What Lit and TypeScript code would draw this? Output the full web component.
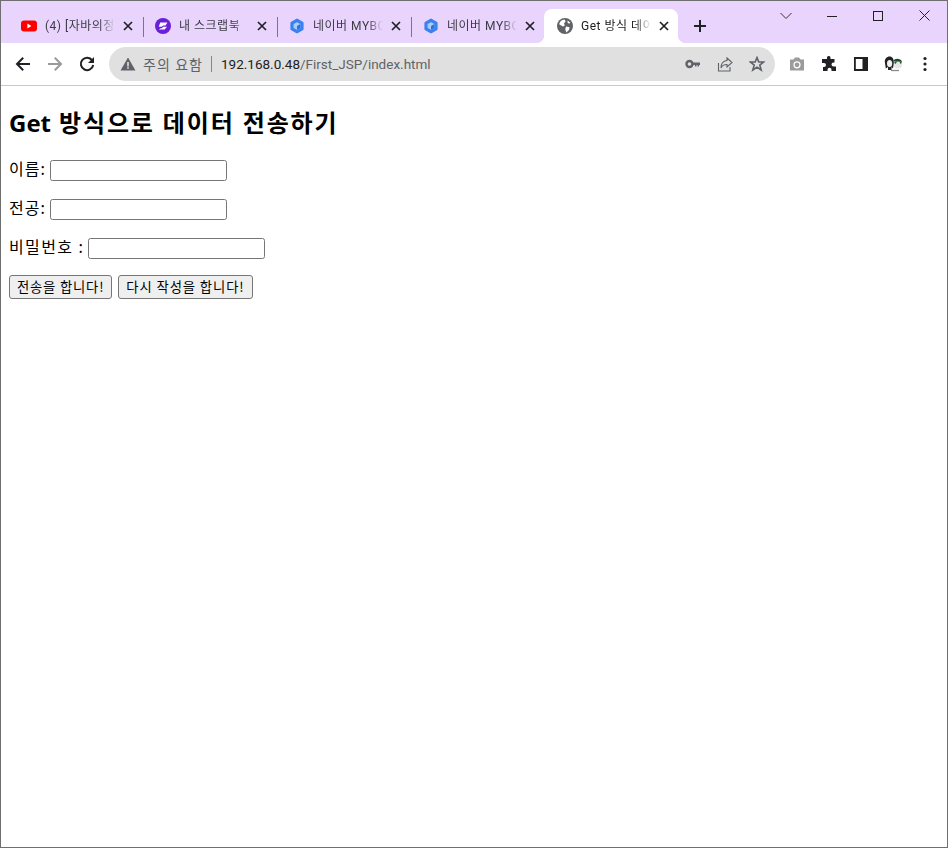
import { LitElement, html, css } from "lit";
import { customElement } from "lit/decorators.js";

const closeIcon = html`<svg class="x" width="10" height="10" viewBox="0 0 10 10"><path d="M1 1L9 9M9 1L1 9" stroke="#202124" stroke-width="1.7" fill="none"/></svg>`;

const yt = html`<svg width="16" height="16" viewBox="0 0 16 16"><rect y="2.5" width="16" height="11" rx="3" fill="#f00"/><path d="M6.4 5.6L10.4 8L6.4 10.4Z" fill="#fff"/></svg>`;
const scrap = html`<svg width="16" height="16" viewBox="0 0 16 16"><circle cx="8" cy="8" r="8" fill="#6a1fd8"/><path d="M5.2 4.6H12.4L10.6 7.4H8.4L6.4 8.8H3.8Z" fill="#fff"/><path d="M7.8 8.8H12L9.6 11.6H3.8L5.6 10.2H7.2Z" fill="#fff"/></svg>`;
const hex = html`<svg width="14" height="16" viewBox="0 0 14 16"><path d="M7 0.6Q7.4 .6 8 1L12.8 3.8Q13.6 4.3 13.6 5V11Q13.6 11.7 12.8 12.2L8 15Q7 15.5 6 15L1.2 12.2Q.4 11.7 .4 11V5Q.4 4.3 1.2 3.8L6 1Q6.6 .6 7 .6Z" fill="#3b82ee"/><path d="M7 4.2L10.4 6.1V9.9L7 11.8L3.6 9.9V6.1Z" fill="#a9ccf8"/><path d="M7 8L10.4 6.1V9.9L7 11.8Z" fill="#2a6ee0"/></svg>`;
const globe = html`<svg width="16" height="16" viewBox="0 0 16 16"><circle cx="8" cy="8" r="8" fill="#5f6368"/><path d="M4.8 2.2L7.6 1.6L8.6 3.2L7 5.6L7.8 7.6L5.8 8.6L2.2 6.2C2.6 4.6 3.4 3.2 4.8 2.2ZM9 8.6L12.6 9.2L12 12L9.4 14.4L8.2 11.2Z" fill="#fff"/><path d="M10.6 2.4L13.4 4.8L12 5.8L10.4 4.2Z" fill="#fff"/></svg>`;

interface Tab { icon: unknown; title: string; }
const tabs: Tab[] = [
  { icon: yt, title: "(4) [자바의정석" },
  { icon: scrap, title: "내 스크랩북" },
  { icon: hex, title: "네이버 MYBOX" },
  { icon: hex, title: "네이버 MYBOX" },
];

@customElement("app-root")
export class AppRoot extends LitElement {
  static styles = css`
    :host { display: block; width: 948px; height: 848px; box-sizing: border-box; border: 1px solid #6f6f6f; background: #fff; overflow: hidden; font-family: "Noto Sans CJK KR", "Liberation Sans", sans-serif; }
    .tabstrip { height: 42px; background: #e9d4fd; display: flex; position: relative; padding: 8px 0 0 7px; box-sizing: border-box; }
    .tab { width: 134px; height: 34px; display: flex; align-items: center; padding: 0 0 0 13px; box-sizing: border-box; position: relative; font: 12px "Roboto", "Noto Sans CJK KR", sans-serif; color: #3c3c44; flex: none; }
    .tab .ic { width: 16px; height: 16px; display: flex; justify-content: center; flex: none; margin-right: 8px; }
    .tab .t { width: 70px; line-height: 16px; letter-spacing: 0.5px; overflow: hidden; white-space: nowrap; flex: none; -webkit-mask-image: linear-gradient(90deg,#000 78%,transparent); mask-image: linear-gradient(90deg,#000 78%,transparent); }
    .tab .x { margin-left: 8px; flex: none; }
    .tab.sep::after { content: ""; position: absolute; right: -2px; top: 8px; height: 20px; width: 1px; background: #7b7485; }
    .tab.active { background: #fff; border-radius: 8px 8px 0 0; color: #202124; }
    .tab.active::before, .tab.active .r { content: ""; position: absolute; bottom: 0; width: 8px; height: 8px; }
    .tab.active::before { left: -8px; background: radial-gradient(circle at 0 0, transparent 8px, #fff 8.5px); }
    .tab.active .r { right: -8px; background: radial-gradient(circle at 100% 0, transparent 8px, #fff 8.5px); }
    .plus { margin: 9px 0 0 14px; width: 16px; height: 16px; flex: none; }
    .win { position: absolute; top: 0; right: 0; display: flex; }
    .win div { width: 46px; height: 29px; display: flex; align-items: center; justify-content: center; }
    .toolbar { height: 42px; background: #fff; display: flex; align-items: center; border-bottom: 1px solid #c8c8c8; box-sizing: content-box; }
    .nav { width: 16px; height: 16px; margin-left: 14px; flex: none; display: block; }
    .nav + .nav { margin-left: 16px; }
    .omni { margin-left: 14px; width: 666px; height: 34px; border-radius: 17px; background: #e0e0e0; display: flex; align-items: center; box-sizing: border-box; padding-left: 11px; flex: none; font: 13.5px "Roboto", "Noto Sans CJK KR", sans-serif; color: #5f6368; }
    .omni .warn { flex: none; margin-right: 7px; }
    .omni .lbl { font-size: 14px; letter-spacing: 1px; }
    .omni .bar { width: 1px; height: 16px; background: #80868b; margin: 0 9px 0 8px; flex: none; }
    .omni .host { color: #202124; }
    .omni .spacer { flex: 1; }
    .omni svg.r { flex: none; margin-right: 16px; }
    .omni svg.last { margin-right: 10px; }
    .tools { display: flex; align-items: center; margin-left: 14px; gap: 16px; }
    .tools svg { flex: none; display: block; }
    .tools .avatar { margin-left: -1px; margin-right: 3px; }
    main { padding: 0 8px; color: #000; }
    h2 { margin: 22px 0 0; font: bold 24px/30px "Open Sans", "Noto Sans CJK KR", sans-serif; letter-spacing: 1.85px; white-space: nowrap; }
    h2 .en { letter-spacing: 0; }
    p { margin: 0; height: 23px; display: flex; align-items: center; font-size: 16px; }
    p.f1 { margin-top: 21px; }
    p.f { margin-top: 16px; }
    p.b { margin-top: 15px; }
    p span { margin-right: 4px; padding-bottom: 5px; letter-spacing: 1px; }
    p span.long { letter-spacing: 1.4px; }
    input { width: 177px; height: 21px; box-sizing: border-box; border: 1px solid #767676; border-radius: 2.5px; background: #fff; padding: 1px 2px; margin: 0; flex: none; }
    button { height: 24px; box-sizing: border-box; border: 1px solid #767676; border-radius: 3px; background: #efefef; font: 13.33px "Noto Sans CJK KR", sans-serif; letter-spacing: 0.8px; color: #000; padding: 0 7px; margin-right: 6px; flex: none; white-space: nowrap; }
    button.wide { letter-spacing: 0.9px; }
  `;

  render() {
    return html`
      <div class="tabstrip">
        ${tabs.map((t, i) => html`
          <div class="tab ${i < 3 ? "sep" : ""}">
            <span class="ic">${t.icon}</span><span class="t">${t.title}</span>${closeIcon}
          </div>`)}
        <div class="tab active"><span class="r"></span><span class="ic">${globe}</span><span class="t">Get 방식 데이터</span>${closeIcon}</div>
        <svg class="plus" viewBox="0 0 16 16"><path d="M8 2V14M2 8H14" stroke="#202124" stroke-width="2"/></svg>
        <div class="win">
          <div><svg width="12" height="8" viewBox="0 0 12 8"><path d="M.5 1L6 6.5L11.5 1" stroke="#333" fill="none"/></svg></div>
          <div><svg width="10" height="10" viewBox="0 0 10 10"><path d="M0 5.5H10" stroke="#222"/></svg></div>
          <div><svg width="10" height="10" viewBox="0 0 10 10"><rect x=".5" y=".5" width="9" height="9" stroke="#222" fill="none"/></svg></div>
          <div><svg width="11" height="11" viewBox="0 0 11 11"><path d="M.5 .5L10.5 10.5M10.5 .5L.5 10.5" stroke="#222" fill="none"/></svg></div>
        </div>
      </div>
      <div class="toolbar">
        <svg class="nav" viewBox="0 0 16 16"><path d="M15 8H2.5M8.2 1.8L2 8L8.2 14.2" stroke="#202124" stroke-width="2" fill="none"/></svg>
        <svg class="nav" viewBox="0 0 16 16"><path d="M1 8H13.5M7.8 1.8L14 8L7.8 14.2" stroke="#9a9a9e" stroke-width="2" fill="none"/></svg>
        <svg class="nav" viewBox="0 0 16 16"><path d="M13.2 4.4A6.2 6.2 0 1 0 14.2 9" stroke="#202124" stroke-width="2" fill="none"/><path d="M15 1V7H9Z" fill="#202124"/></svg>
        <div class="omni">
          <svg class="warn" width="16" height="16" viewBox="0 0 16 16"><path d="M8 1.5L15.5 14.5H.5Z" fill="#5f6368"/><path d="M7.2 6H8.8V10.5H7.2ZM7.2 11.3H8.8V12.8H7.2Z" fill="#e0e0e0"/></svg>
          <span class="lbl">주의 요함</span><span class="bar"></span>
          <span><span class="host">192.168.0.48</span>/First_JSP/index.html</span>
          <span class="spacer"></span>
          <svg class="r" width="16" height="16" viewBox="0 0 16 16"><circle cx="4.5" cy="8" r="3" stroke="#5f6368" stroke-width="2.4" fill="none"/><path d="M7.5 6.6H15V9H14V10.5H12.5V9H11.5V10.5H10V9H7.5Z" fill="#5f6368"/></svg>
          <svg class="r" width="16" height="16" viewBox="0 0 16 16"><path d="M1.5 7V15H13V11" stroke="#5f6368" stroke-width="1.1" fill="none"/><path d="M10 2L15 6.5L10 11V8.5C7 8.5 5 9.5 4 12C4 8 6 5 10 4.5Z" stroke="#5f6368" stroke-width="1.1" fill="none"/></svg>
          <svg class="r last" width="16" height="16" viewBox="0 0 16 16"><path d="M8 1.6L9.8 6H14.8L10.8 9L12.2 14L8 11.1L3.8 14L5.2 9L1.2 6H6.2Z" stroke="#5f6368" stroke-width="1.6" fill="none"/></svg>
        </div>
        <div class="tools">
          <svg width="16" height="16" viewBox="0 0 16 16"><path d="M1 3.5H4.5L6 1.5H10L11.5 3.5H15V14.5H1Z" fill="#9b9b9e"/><circle cx="8" cy="8.8" r="3.6" fill="#fff"/><circle cx="8" cy="8.8" r="2.4" fill="#9b9b9e"/></svg>
          <svg width="16" height="16" viewBox="0 0 16 16"><path d="M6 1.5A1.8 1.8 0 0 1 9.5 1.5V3H13.5V6.5H12.5A2 2 0 0 0 12.5 10.5H15V15H10.5V13.8A2 2 0 0 0 6.5 13.8V15H2V11H3A2 2 0 0 0 3 7H1V3H6Z" fill="#202124"/></svg>
          <svg width="16" height="16" viewBox="0 0 16 16"><path d="M1 1H15V15H1Z" fill="#202124"/><rect x="2.8" y="3" width="6.7" height="10" fill="#fff"/></svg>
          <svg class="avatar" width="20" height="16" viewBox="0 0 20 16"><path d="M1 7C0 3 3 .5 5.5 .5C8.5 .5 10 3 9.8 7L9 12.5L7.5 11V14H4V11L1.8 12.5Z" fill="#232326"/><ellipse cx="5.6" cy="7.5" rx="2.6" ry="3.6" fill="#f1f1f1"/><path d="M9.5 5C10.5 2 16.5 2 18 5.5L14 6.5Z" fill="#1d4d2a"/><ellipse cx="14" cy="9" rx="4" ry="3.6" fill="#e3e8e3"/><path d="M10 5.5L13 6.5L11 8ZM18 5.5L15.5 6.5L17 8Z" fill="#1d4d2a"/><path d="M7 14.5H15" stroke="#8a8a8a" stroke-width="1.3"/></svg>
          <svg width="4" height="16" viewBox="0 0 4 16"><circle cx="2" cy="2.5" r="1.6" fill="#202124"/><circle cx="2" cy="8" r="1.6" fill="#202124"/><circle cx="2" cy="13.5" r="1.6" fill="#202124"/></svg>
        </div>
      </div>
      <main>
        <h2><span class="en">Get</span> 방식으로 데이터 전송하기</h2>
        <p class="f1"><span>이름:</span><input /></p>
        <p class="f"><span>전공:</span><input /></p>
        <p class="f"><span class="long">비밀번호 :</span><input /></p>
        <p class="b"><button>전송을 합니다!</button><button class="wide">다시 작성을 합니다!</button></p>
      </main>
    `;
  }
}
